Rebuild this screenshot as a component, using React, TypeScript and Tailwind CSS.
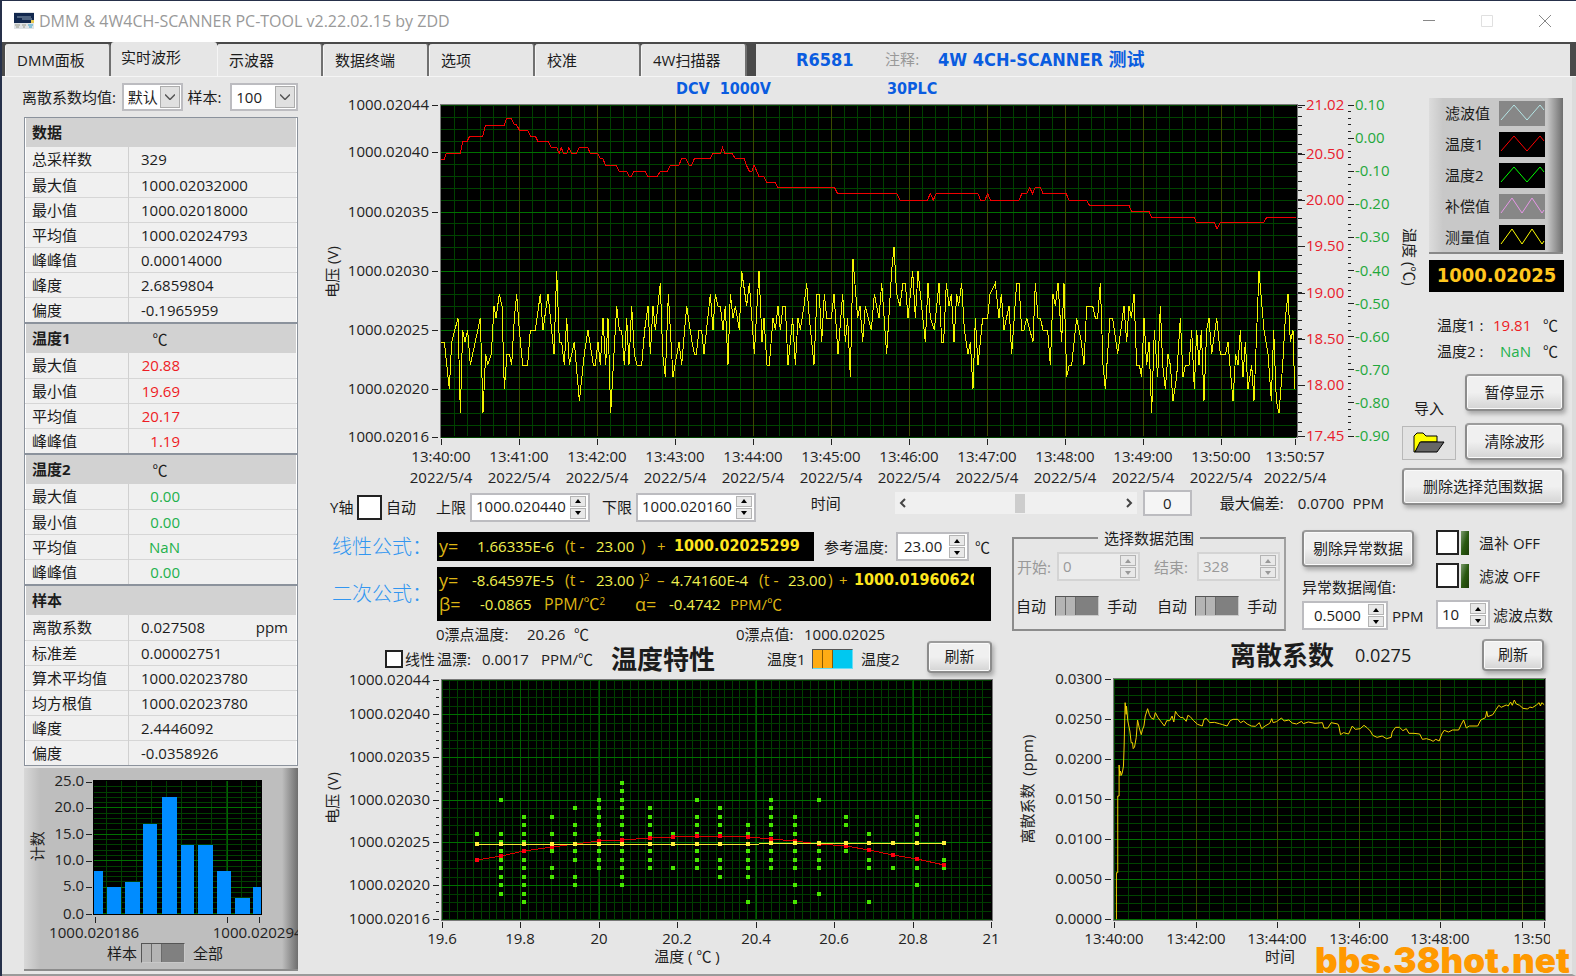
import { ReactNode, useState } from "react";

type Point = [number, number];

const range = (n: number) => Array.from({ length: n }, (_, i) => i);

const parse = (text: string): Point[] =>
  text.split(" ").map((pair) => pair.split(",").map(Number) as Point);

// Measured value, three stretches of the record: [start offset, "x,level ..."]
const waveParts: [number, string][] = [
  [0, "15,24 25,24 40,20 47,24 66,26 73,18 80,25 87,24 95,25 103,22 133,26 141,18 149,23 155,22 166,23 174,27 180,26 190,28 198,27 205,20 213,23 220,23 227,22 235,26 242,28 250,25 260,22 275,22 283,25 298,25 313,28 321,25 336,28 354,23 362,30 370,24 377,24 385,22 392,26 400,22 415,24 430,19 445,23 456,25 472,22 478,22 486,24 493,22 501,26 509,22 516,26 524,18 542,27 550,25 557,25 565,22 572,26 579,22 587,27 595,23 603,22 617,22 626,25 636,27 643,23 651,27 658,25 673,29 680,23 688,21 697,28 711,21 729,24 737,22 752,27 768,24 775,23 781,23 789,25 797,25 804,23 823,28 831,25 838,28 846,27 853,27"],
  [858, "3,25 10,27 18,22 25,28 33,26 40,27 52,25 59,30 74,27 82,29 97,23 111,30 120,24 126,26 135,22 142,22 153,26 160,25 168,27 175,25 183,27 190,27 198,22 212,26 220,22 228,26 235,25 246,27 254,29 262,26 276,22 285,28 292,28 299,24 307,28 314,26 328,26 336,28 348,23 362,28 370,24 377,26 385,21 393,31 407,26 414,27 422,24 430,27 448,25 457,28 471,26 479,29 494,23 509,30 516,32 524,28 534,27 543,29 550,29 558,26 572,30 580,26 588,30 610,24 618,29 625,26 637,25 651,29 659,24 665,24 673,29 681,27 688,28 696,24 704,28 710,27 719,29 727,25 738,23 745,24 753,20 760,26 768,22 782,26 797,26 804,28 820,29 831,26 838,28 846,25"],
  [1716, "3,27 11,23 26,29 33,29 41,25 48,25 56,26 75,24 82,29 90,26 97,26 105,25 119,25 127,22 135,28 142,27 150,29 161,24 168,29 176,21 184,22 191,22 206,26 220,24 228,22 236,27 254,27 262,26 269,26 277,29 285,22 292,20 306,26 314,26 329,23 348,27 356,24 363,27 370,26 378,28 386,22 394,22 401,21 408,26 416,22 423,24 431,18 439,25 449,21 457,27 464,22 472,20 480,23 487,22 495,19 506,21 517,26 525,21 532,22 543,22 551,25 559,20 566,25 573,22 580,25 588,19 596,25 603,26 611,23 626,26 637,23 653,23 660,24 675,19 683,23 690,22 697,25 705,21 712,24 720,20 731,22 738,19 753,30 768,25 780,23 790,19 797,25 805,19 813,18 824,22 832,26 840,28 847,24 855,25 860,20"],
];

const temperatureParts: [number, string][] = [
  [0, "1316,477 1325,477 1330,461 1372,461 1380,423 1393,423 1400,409 1439,409 1447,375 1503,375 1510,356 1524,356 1532,372 1540,375 1548,390 1568,390"],
  [1578, "5,390 14,409 28,409 35,423 66,423 75,443 92,443 99,461 105,443 113,461 121,461 128,443 137,461 150,461 158,443 184,443 192,461 214,461 222,476 229,476 237,495 269,495 278,514 300,514 308,529 314,529 321,514 355,514 363,529 392,529 400,514 422,514 431,495 456,495 464,476 476,476 486,495 494,495 502,476 549,476 556,461 580,461 586,443 593,461 615,461 624,476 650,476 659,500 666,514 673,514 680,495 688,514 694,529 709,529 717,547 743,547 750,563 920,563 929,581 1105,581 1115,600 1197,600 1205,581 1214,600 1223,581 1347,581 1355,600 1368,600 1376,581 1385,600 1470,600 1478,581 1492,581 1501,563 1510,581 1518,563 1534,563 1541,581"],
  [3150, "48,581 57,600 108,600 117,615 235,615 243,634 295,634 303,652 430,652 436,667 489,667 498,686 508,667 637,667 646,652 734,652"],
];

const dispersion =
  "198,820 198,680 202,680 202,450 206,450 206,357 208,390 210,375 213,388 216,378 219,360 221,300 222,255 224,170 227,205 228,180 232,225 238,255 242,290 246,290 248,308 252,303 257,275 261,222 266,245 272,266 276,250 280,240 284,210 291,188 296,205 301,215 309,220 314,200 322,215 332,228 341,240 348,224 357,224 364,210 369,228 374,196 380,206 390,215 396,214 406,226 411,208 418,212 428,224 440,235 454,240 459,220 466,217 476,230 490,229 505,233 515,236 528,240 537,224 546,220 560,220 568,230 577,225 588,234 600,240 612,241 624,230 631,248 641,240 655,232 661,218 665,230 675,227 690,216 698,225 712,222 722,231 735,234 750,226 755,233 770,228 790,232 812,230 817,246 828,246 838,230 858,234 861,240 866,266 875,260 890,264 901,240 910,250 925,248 936,238 945,245 955,255 962,268 975,274 990,270 1003,278 1017,274 1020,258 1030,244 1042,244 1052,254 1062,248 1070,262 1085,262 1102,264 1110,280 1122,278 1135,282 1142,286 1150,280 1160,285 1168,264 1175,253 1188,258 1200,252 1218,252 1226,235 1233,222 1241,246 1250,240 1275,240 1284,222 1298,215 1302,196 1305,212 1320,206 1330,190 1338,178 1345,184 1360,177 1366,180 1373,168 1378,178 1384,162 1390,174 1400,178 1410,187 1424,189 1430,183 1438,185 1450,177 1458,170 1462,180 1466,170 1473,176";

// Temperature, fitted curve height and the sampled levels of each column
const scatter: [number, number, number[]][] = [
  [19.69, 642, [26]],
  [19.75, 631, [30, 26, 25, 24, 23, 22, 21, 20, 19]],
  [19.81, 616, [28, 27, 26, 25, 24, 23, 22, 21, 20, 19, 18]],
  [19.88, 604, [28, 26, 24, 22, 21]],
  [19.94, 593, [29, 27, 26, 24, 23, 21, 20]],
  [20.0, 586, [30, 29, 28, 27, 26, 24, 23, 22]],
  [20.06, 582, [32, 31, 30, 29, 28, 27, 26, 24, 23, 22, 21, 20]],
  [20.13, 575, [29, 28, 27, 26, 24, 23, 22]],
  [20.19, 574, [26, 22]],
  [20.25, 571, [30, 28, 27, 26, 24, 23, 22]],
  [20.31, 571, [29, 28, 27, 26, 23, 22, 21]],
  [20.38, 574, [27, 26, 24, 23, 22, 21, 18]],
  [20.44, 579, [30, 29, 28, 27, 26, 24, 23, 22]],
  [20.5, 585, [28, 27, 26, 24, 23, 22, 20, 18]],
  [20.56, 593, [30, 24, 23, 22, 19]],
  [20.63, 601, [28, 27, 24]],
  [20.69, 612, [26, 23, 22, 18]],
  [20.75, 627, [22]],
  [20.81, 638, [28, 27, 26, 22, 20]],
  [20.88, 658, [23, 22]],
];

const voltLevels = [44, 40, 35, 30, 25, 20, 16];

function Label({ x, y, children, anchor = "middle", fill = "#222" }: { x: number; y: number; children: ReactNode; anchor?: "start" | "middle" | "end"; fill?: string }) {
  return (
    <text x={x} y={y + 5} textAnchor={anchor} fill={fill} fontSize="15">
      {children}
    </text>
  );
}

function Line({ x1, y1, x2, y2, c = "#222", w = 1 }: { x1: number; y1: number; x2: number; y2: number; c?: string; w?: number }) {
  return <line x1={x1} y1={y1} x2={x2} y2={y2} stroke={c} strokeWidth={w} />;
}

function MainChart() {
  const left = 441;
  const right = 1296;
  const vy = (v: number) => Math.round(105 + (44 - v) * 11.84);
  const tx = (minute: number) => Math.round(441.4 + minute * 77.93);
  const wave = waveParts
    .flatMap(([off, s]) => parse(s).map(([x, v]) => `${436 + (off + x) / 3},${vy(v)}`))
    .join(" ");
  const temp = temperatureParts
    .flatMap(([off, s]) => parse(s).map(([x, y]) => `${(off + x * 1.0064) / 3},${y / 3}`))
    .join(" ");
  const stamps = [...range(11).map((m) => ({ x: tx(m), t: `13:${40 + m}:00` })), { x: 1295, t: "13:50:57" }];
  const reds: [string, number][] = [["21.02", 105], ["20.50", 154], ["20.00", 200], ["19.50", 246], ["19.00", 293], ["18.50", 339], ["18.00", 385], ["17.45", 436]];

  return (
    <svg viewBox="325 97 1077 395" className="block w-full overflow-visible">
      <g shapeRendering="crispEdges">
        <rect x="440" y="104" width="857" height="333" fill="#000" stroke="#777" />
        {range(65).map((i) => i % 6 !== 0 && <Line key={i} x1={tx(i / 6)} x2={tx(i / 6)} y1={105} y2={436} c="#004000" />)}
        {range(29).map((i) => <Line key={i} x1={left} x2={right} y1={vy(16 + i)} y2={vy(16 + i)} c="#004400" />)}
        {voltLevels.slice(1, 6).map((v) => <Line key={v} x1={left} x2={right} y1={vy(v)} y2={vy(v)} c="#007000" />)}
        {range(10).map((i) => <Line key={i} x1={tx(i + 1)} x2={tx(i + 1)} y1={105} y2={436} c="#3c4a00" />)}
        {voltLevels.map((v) => <Line key={v} x1={432} x2={438} y1={vy(v)} y2={vy(v)} />)}
        {stamps.map((s) => <Line key={s.t} x1={s.x} x2={s.x} y1={439} y2={445} />)}
        {reds.map(([t, y]) => <Line key={t} x1={1298} x2={1305} y1={y} y2={y} />)}
        {range(36).map((i) => <Line key={i} x1={1298} x2={1302} y1={107 + i * 9.27} y2={107 + i * 9.27} />)}
        {range(11).map((i) => <Line key={i} x1={1348} x2={1354} y1={105 + i * 33.1} y2={105 + i * 33.1} />)}
        {range(51).map((i) => <Line key={i} x1={1348} x2={1351} y1={105 + i * 6.62} y2={105 + i * 6.62} />)}
        <polyline points={wave} fill="none" stroke="#f2f200" />
        <polyline points={temp} fill="none" stroke="#f00000" />
      </g>
      {voltLevels.map((v) => <Label key={v} x={429} y={vy(v)} anchor="end">{`1000.020${v}`}</Label>)}
      {stamps.map((s) => (
        <g key={s.t}>
          <Label x={s.x} y={457}>{s.t}</Label>
          <Label x={s.x} y={478}>2022/5/4</Label>
        </g>
      ))}
      {reds.map(([t, y]) => <Label key={t} x={1306} y={y} anchor="start" fill="#e8202c">{t}</Label>)}
      {range(11).map((i) => (
        <Label key={i} x={1355} y={Math.round(105 + i * 33.1)} anchor="start" fill="#1fa83c">
          {(0.1 - i * 0.1).toFixed(2).replace("-0.00", "0.00")}
        </Label>
      ))}
      <g transform="rotate(-90 333 272)">
        <Label x={333} y={272}>电压 (V)</Label>
      </g>
    </svg>
  );
}

function ScatterChart() {
  const vy = (v: number) => Math.round(680 + (44 - v) * 8.55);
  const tx = (t: number) => Math.round(442 + (t - 19.6) * 392.2);
  const cy = (y: number) => Math.round(646 + y / 3);
  const fitted = scatter.map(([t, y]) => `${tx(t)},${cy(y)}`).join(" ");

  return (
    <svg viewBox="325 672 675 302" className="block w-full overflow-visible">
      <g shapeRendering="crispEdges">
        <rect x="441" y="679" width="551" height="241" fill="#000" stroke="#777" />
        {range(70).map((i) => <Line key={i} x1={442 + i * 7.84} x2={442 + i * 7.84} y1={680} y2={919} c="#004000" />)}
        {range(29).map((i) => <Line key={i} x1={442} x2={991} y1={vy(16 + i)} y2={vy(16 + i)} c="#003c00" />)}
        {voltLevels.slice(1, 6).map((v) => <Line key={v} x1={442} x2={991} y1={vy(v)} y2={vy(v)} c="#007000" />)}
        {range(6).map((i) => <Line key={i} x1={tx(19.8 + i * 0.2)} x2={tx(19.8 + i * 0.2)} y1={680} y2={919} c="#006400" />)}
        {range(29).map((i) => <Line key={i} x1={436} x2={439} y1={vy(16 + i)} y2={vy(16 + i)} />)}
        {voltLevels.map((v) => <Line key={v} x1={433} x2={439} y1={vy(v)} y2={vy(v)} />)}
        {range(8).map((i) => <Line key={i} x1={tx(19.6 + i * 0.2)} x2={tx(19.6 + i * 0.2)} y1={922} y2={928} />)}
        {scatter.map(([t, , levels]) =>
          levels.map((v) => <rect key={`${t}-${v}`} x={tx(t) - 2} y={vy(v) - 2} width="4" height="4" fill="#48e600" />)
        )}
        <polyline points={fitted} fill="none" stroke="#d80000" />
        <polyline points="477,844 759,844 761,843 943,843" fill="none" stroke="#f5e632" />
        {scatter.map(([t, y]) => (
          <g key={t}>
            <rect x={tx(t) - 2} y={cy(y) - 2} width="4" height="4" fill="#ff0010" />
            <rect x={tx(t) - 2} y={t < 20.4 ? 842 : 841} width="4" height="4" fill="#fff03c" />
          </g>
        ))}
      </g>
      {voltLevels.map((v) => <Label key={v} x={430} y={vy(v)} anchor="end">{`1000.020${v}`}</Label>)}
      {["19.6", "19.8", "20", "20.2", "20.4", "20.6", "20.8", "21"].map((t) => <Label key={t} x={tx(Number(t))} y={939}>{t}</Label>)}
      <Label x={687} y={957}>温度 ( ℃ )</Label>
      <g transform="rotate(-90 333 798)">
        <Label x={333} y={798}>电压 (V)</Label>
      </g>
    </svg>
  );
}

function DispersionChart() {
  const tx = (i: number) => Math.round(1114 + i * 13.59);
  const points = parse(dispersion).map(([x, y]) => `${1050 + (x * 1.0064) / 3},${646 + y / 3}`).join(" ");

  return (
    <svg viewBox="1012 672 552 302" className="block w-full overflow-visible">
      <clipPath id="timeAxis">
        <rect x="1012" y="925" width="538" height="30" />
      </clipPath>
      <g shapeRendering="crispEdges">
        <rect x="1113" y="678" width="432" height="242" fill="#000" stroke="#777" />
        {range(32).map((i) => <Line key={i} x1={tx(i)} x2={tx(i)} y1={679} y2={919} c="#004000" />)}
        {range(31).map((i) => <Line key={i} x1={1114} x2={1544} y1={679 + i * 8} y2={679 + i * 8} c={i % 5 ? "#004400" : "#007000"} />)}
        {range(5).map((i) => <Line key={i} x1={tx(6 * i + 6)} x2={tx(6 * i + 6)} y1={679} y2={919} c="#3c4a00" />)}
        {range(7).map((i) => <Line key={i} x1={1105} x2={1111} y1={679 + i * 40} y2={679 + i * 40} />)}
        {range(6).map((i) => <Line key={i} x1={tx(6 * i)} x2={tx(6 * i)} y1={922} y2={928} />)}
        <Line x1={1544} x2={1544} y1={922} y2={928} />
      </g>
      <polyline points={points} fill="none" stroke="#f0d000" />
      {range(7).map((i) => <Label key={i} x={1102} y={679 + i * 40} anchor="end">{(0.03 - i * 0.005).toFixed(4)}</Label>)}
      <g clipPath="url(#timeAxis)">
        {range(6).map((i) => <Label key={i} x={i === 5 ? 1543 : tx(6 * i)} y={939}>{`13:${40 + 2 * i}:00`}</Label>)}
      </g>
      <Label x={1280} y={957}>时间</Label>
      <g transform="rotate(-90 1028 789)">
        <Label x={1028} y={789}>{"离散系数\u00a0\u00a0(ppm)"}</Label>
      </g>
    </svg>
  );
}

const bars: [number, number, number][] = [
  [94, 9, 8], [107, 14, 5], [125, 15, 6], [143, 14, 17], [161, 15, 22],
  [180, 13, 13], [197, 15, 13], [216, 14, 8], [234, 15, 3], [252, 8, 5],
];

function Histogram() {
  return (
    <svg viewBox="24 768 273 176" className="block w-full">
      <g shapeRendering="crispEdges">
        <rect x="93" y="780" width="168" height="134" fill="#000" />
        {range(11).map((i) => <Line key={i} x1={106 + i * 15} x2={106 + i * 15} y1={781} y2={913} c="#004000" />)}
        {range(25).map((i) => <Line key={i} x1={94} x2={260} y1={913 - i * 5.26} y2={913 - i * 5.26} c={i % 5 ? "#004000" : "#007000"} />)}
        <Line x1={227} x2={227} y1={781} y2={913} c="#006400" />
        {bars.map(([x, w, n]) => <rect key={x} x={x} y={913 - n * 5.26} width={w} height={n * 5.26} fill="#008cff" />)}
        {range(6).map((i) => <Line key={i} x1={86} x2={92} y1={782 + i * 26.3} y2={782 + i * 26.3} />)}
        {[95, 227, 259].map((x) => <Line key={x} x1={x} x2={x} y1={916} y2={922} />)}
      </g>
      {range(6).map((i) => <Label key={i} x={84} y={Math.round(781 + i * 26.3)} anchor="end">{(25 - i * 5).toFixed(1)}</Label>)}
      <Label x={49} y={932} anchor="start">1000.020186</Label>
      <Label x={212} y={932} anchor="start">1000.020294</Label>
      <g transform="rotate(-90 38 846)">
        <Label x={38} y={846}>计数</Label>
      </g>
    </svg>
  );
}

type Row = { name: string; value: string; unit?: string };

const sections: { title: string; unit?: string; tone: string; rows: Row[] }[] = [
  {
    title: "数据",
    tone: "text-[#1c1c1c]",
    rows: [
      { name: "总采样数", value: "329" },
      { name: "最大值", value: "1000.02032000" },
      { name: "最小值", value: "1000.02018000" },
      { name: "平均值", value: "1000.02024793" },
      { name: "峰峰值", value: "0.00014000" },
      { name: "峰度", value: "2.6859804" },
      { name: "偏度", value: "-0.1965959" },
    ],
  },
  {
    title: "温度1",
    unit: "℃",
    tone: "text-[#ee1c24]",
    rows: [
      { name: "最大值", value: "20.88" },
      { name: "最小值", value: "19.69" },
      { name: "平均值", value: "20.17" },
      { name: "峰峰值", value: "1.19" },
    ],
  },
  {
    title: "温度2",
    unit: "℃",
    tone: "text-[#22b14c]",
    rows: [
      { name: "最大值", value: "0.00" },
      { name: "最小值", value: "0.00" },
      { name: "平均值", value: "NaN" },
      { name: "峰峰值", value: "0.00" },
    ],
  },
  {
    title: "样本",
    tone: "text-[#1c1c1c]",
    rows: [
      { name: "离散系数", value: "0.027508", unit: "ppm" },
      { name: "标准差", value: "0.00002751" },
      { name: "算术平均值", value: "1000.02023780" },
      { name: "均方根值", value: "1000.02023780" },
      { name: "峰度", value: "2.4446092" },
      { name: "偏度", value: "-0.0358926" },
    ],
  },
];

function StatsTable() {
  return (
    <div className="ml-0.5 border border-[#8b929c] bg-[#8b929c]">
      {sections.map((s, i) => (
        <table key={s.title} className={`w-full table-fixed border-collapse border-x border-white bg-[#f0f0f0] ${i > 0 ? "mt-0.5" : ""}`}>
          <thead>
            <tr className="h-[29px] bg-[#d2d2d2] text-left">
              <th scope="col" className="w-[103px] pb-0.5 pl-1.5 font-bold">{s.title}</th>
              <th scope="col" className="pl-6 font-normal">{s.unit}</th>
            </tr>
          </thead>
          <tbody>
            {s.rows.map((r) => (
              <tr key={r.name} className="h-[25px] border-b border-[#d6d6d6] last:border-b-0">
                <th scope="row" className="border-r border-[#d0d0d0] pl-1.5 text-left font-normal">{r.name}</th>
                <td className={`pl-3 ${s.tone}`}>
                  <div className="flex justify-between pr-2">
                    <span className={s.unit ? "w-[39px] text-right" : ""}>{r.value}</span>
                    <span>{r.unit}</span>
                  </div>
                </td>
              </tr>
            ))}
          </tbody>
        </table>
      ))}
    </div>
  );
}

function PushButton({ children, className = "" }: { children: ReactNode; className?: string }) {
  return (
    <button className={`rounded border-2 border-[#8c8c8c] border-t-[#9c9c9c] bg-gradient-to-b from-[#f0f0f0] from-50% to-[#d4d4d4] pb-0.5 text-[#1c1c1c] shadow-[inset_0_0_0_1px_#fafafa,2px_3px_4px_#a8a8a8] ${className}`}>
      {children}
    </button>
  );
}

function Spin({ label, value, className = "", disabled = false }: { label: string; value: string; className?: string; disabled?: boolean }) {
  const [text, setText] = useState(value);
  const step = (d: number) => {
    const digits = (text.split(".")[1] || "").length;
    setText((Number(text) + d / 10 ** digits).toFixed(digits));
  };
  return (
    <div className={`flex h-[29px] shrink-0 items-center border-2 pr-0.5 ${disabled ? "border-[#d4d4d4] bg-[#ececec] text-[#999]" : "border-[#bcbcc0] bg-white"} ${className}`}>
      <input aria-label={label} value={text} disabled={disabled} onChange={(e) => setText(e.target.value)} className="w-0 min-w-0 flex-1 bg-transparent pb-0.5 pl-1 outline-none" />
      <div className="flex w-4 flex-col gap-px">
        {[1, -1].map((d) => (
          <button key={d} disabled={disabled} aria-label={d > 0 ? `${label} +` : `${label} -`} onClick={() => step(d)} className="flex h-[11px] items-center justify-center border border-[#b4b4b4] bg-[#e8e8e8]">
            <svg viewBox="0 0 8 4" className={`h-1 w-2 ${disabled ? "fill-[#999]" : "fill-black"} ${d < 0 ? "rotate-180" : ""}`}>
              <path d="M4 0 7 4H1z" />
            </svg>
          </button>
        ))}
      </div>
    </div>
  );
}

function Check({ label, className }: { label: string; className: string }) {
  return <input type="checkbox" aria-label={label} className={`shrink-0 appearance-none border-2 border-[#222] bg-white checked:bg-gray-600 ${className}`} />;
}

function Toggle({ label, bright = false }: { label: string; bright?: boolean }) {
  const [on, setOn] = useState(false);
  return (
    <button
      role="switch"
      aria-checked={on}
      aria-label={label}
      onClick={() => setOn(!on)}
      className={`flex h-5 shrink-0 border border-t-[#555] border-l-[#555] ${on ? "justify-end" : "justify-start"} ${bright ? "w-[41px] border-[#66dcf5] bg-[#00c8f0]" : "w-[44px] border-[#c8c8c8] bg-[#808080]"}`}
    >
      <span className={`h-full w-2.5 border-r ${bright ? "border-[#8a5a00] bg-[#ffac14]" : "border-[#6a6a6a] bg-[#b4b4b4]"}`} />
      <span className={`h-full w-2.5 border-r ${bright ? "border-[#8a5a00] bg-[#ffac14]" : "border-[#6a6a6a] bg-[#b4b4b4]"}`} />
    </button>
  );
}

function Combo({ label, options, className }: { label: string; options: string[]; className: string }) {
  return (
    <div className={`relative h-7 border-2 border-[#bcbcc0] bg-white ${className}`}>
      <select aria-label={label} className="h-full w-full appearance-none bg-transparent pl-1 leading-6 outline-none">
        {options.map((o) => <option key={o}>{o}</option>)}
      </select>
      <span className="pointer-events-none absolute inset-y-px right-px flex w-5 items-center justify-center border border-[#acacac] bg-[#e0e0e0]">
        <svg viewBox="0 0 10 6" className="h-1.5 w-2.5" fill="none" stroke="#555" strokeWidth="1.5">
          <path d="M0 0.5 5 5.5 10 0.5" />
        </svg>
      </span>
    </div>
  );
}

const legend = [
  { name: "滤波值", box: "bg-[#878787]", color: "#b4e6e6", path: "M2 19 15 4 28 19 41 4 45 9" },
  { name: "温度1", box: "bg-black", color: "#ff0000", path: "M2 19 15 4 28 19 41 4 45 9" },
  { name: "温度2", box: "bg-black", color: "#00ff00", path: "M2 19 15 4 28 19 41 4 45 9" },
  { name: "补偿值", box: "bg-[#878787]", color: "#e696e6", path: "M2 19 13 4 23 19 33 4 43 19 45 16" },
  { name: "测量值", box: "bg-black", color: "#ffff00", path: "M2 19 13 4 23 19 33 4 43 19 45 16" },
];

function Sidebar() {
  return (
    <aside className="flex w-[162px] shrink-0 flex-col pt-[18px]">
      <div className="flex justify-between">
        <div className="flex h-[156px] w-4 items-end">
          <span className="-mb-8 whitespace-nowrap leading-4 [writing-mode:vertical-rl] [text-orientation:sideways]">温度 (℃)</span>
        </div>
        <div className="w-[135px]">
          <ul className="flex h-[156px] w-[134px] flex-col gap-[5px] border-b-2 border-[#888] bg-[linear-gradient(to_right,#dcdcdc,#c8c8c8_14px,#c8c8c8_118px,#6e6e6e)] pt-0.5">
            {legend.map((l) => (
              <li key={l.name} className="flex h-[26px] items-center pl-4">
                <span className="w-[54px]">{l.name}</span>
                <svg viewBox="0 0 46 25" className={`h-[25px] w-[46px] ${l.box}`} fill="none" stroke={l.color}>
                  <path d={l.path} />
                </svg>
              </li>
            ))}
          </ul>
          <output className="mt-1.5 block h-8 bg-black text-center font-['DejaVu_Sans_Condensed','DejaVu_Sans',sans-serif] text-[20px] leading-[30px] font-bold text-[#ffc61e]">1000.02025</output>
        </div>
      </div>
      <dl className="mt-5 grid grid-cols-[56px_38px_27px] justify-end pr-1.5 text-right leading-[26px]">
        <dt className="text-left">温度1 :</dt>
        <dd className="text-[#ee1c24]">19.81</dd>
        <dd>℃</dd>
        <dt className="text-left">温度2 :</dt>
        <dd className="text-[#22b14c]">NaN</dd>
        <dd>℃</dd>
      </dl>
      <div className="mt-2.5 flex justify-between">
        <div className="flex w-[54px] flex-col items-center pt-6">
          <label htmlFor="import" className="leading-5">导入</label>
          <button id="import" className="mt-2 flex h-[34px] w-full items-center justify-center border border-[#b8b8b8] bg-[#e2e2e2]">
            <svg viewBox="0 0 32 22" className="h-[22px] w-8" stroke="#000" strokeWidth="1">
              <path d="M1 20V4L4 1H10L13 4H24V10H8L2 20z" fill="#ffff00" />
              <path d="M7 10H31L24 20H2z" fill="#666" />
            </svg>
          </button>
        </div>
        <div className="flex w-[99px] flex-col gap-3">
          <PushButton className="h-[37px]">暂停显示</PushButton>
          <PushButton className="h-[37px]">清除波形</PushButton>
        </div>
      </div>
      <PushButton className="mt-2 h-[37px]">删除选择范围数据</PushButton>
    </aside>
  );
}

function ChartControls() {
  return (
    <div className="mb-1 flex h-[30px] items-center pl-[5px] whitespace-nowrap">
      <span className="w-[27px]">Y轴</span>
      <Check label="自动" className="h-[25px] w-[25px]" />
      <span className="ml-1 w-[50px]">自动</span>
      <span className="w-[34px]">上限</span>
      <Spin label="上限" value="1000.020440" className="w-[120px]" />
      <span className="ml-3 w-[34px]">下限</span>
      <Spin label="下限" value="1000.020160" className="w-[120px]" />
      <div className="ml-auto flex items-center pr-[18px] pb-2">
        <label htmlFor="time" className="mr-[54px]">时间</label>
        <div className="flex h-[22px] w-[242px] items-center bg-[#f0f0f0] px-1">
          <button aria-label="后退" className="w-3">
            <svg viewBox="0 0 8 10" className="h-2.5 w-2" fill="none" stroke="#444" strokeWidth="2"><path d="M6 1 2 5 6 9" /></svg>
          </button>
          <input
            id="time"
            type="range"
            defaultValue={52}
            className="h-5 w-0 flex-1 appearance-none bg-transparent [&::-webkit-slider-thumb]:h-[19px] [&::-webkit-slider-thumb]:w-2.5 [&::-webkit-slider-thumb]:appearance-none [&::-webkit-slider-thumb]:bg-[#cdcdcd]"
          />
          <button aria-label="前进" className="w-3">
            <svg viewBox="0 0 8 10" className="ml-1 h-2.5 w-2" fill="none" stroke="#444" strokeWidth="2"><path d="M2 1 6 5 2 9" /></svg>
          </button>
        </div>
        <input aria-label="位置" defaultValue="0" className="ml-1.5 h-[26px] w-[49px] border-2 border-[#bcbcc0] bg-[#f5f5f5] text-center outline-none" />
        <span className="ml-7">最大偏差:</span>
        <span className="ml-3.5">0.0700</span>
        <span className="ml-2">PPM</span>
      </div>
    </div>
  );
}

function Formulas() {
  const bold = "overflow-hidden font-['DejaVu_Sans_Condensed','DejaVu_Sans',sans-serif] text-[16px] font-bold text-[#ffe61e]";
  const name = "w-[105px] shrink-0 text-[20px] font-light text-[#3296f0]";
  return (
    <div className="flex flex-col gap-1.5 whitespace-nowrap pt-1 pl-[7px]">
      <div className="flex items-center">
        <span className={name}>线性公式：</span>
        <div className="flex h-[29px] w-[377px] items-center overflow-hidden bg-black pb-0.5 pl-0.5 text-[#dcb414]">
          <span className="w-[38px] text-[18px]">y=</span>
          <span className="w-[88px] text-[#f0f050]">1.66335E-6</span>
          <span className="w-[31px] text-[16px]">(t -</span>
          <span className="w-[45px] text-[#f0f050]">23.00</span>
          <span className="w-4 text-[16px]">)</span>
          <span className="w-[17px]">+</span>
          <span className={bold}>1000.02025299</span>
        </div>
        <span className="ml-2.5 w-[72px]">参考温度:</span>
        <Spin label="参考温度" value="23.00" className="w-[73px] pl-0.5" />
        <span className="ml-1.5">℃</span>
      </div>
      <div className="flex items-center">
        <span className={name}>二次公式：</span>
        <div className="flex h-[54px] w-[554px] flex-col bg-black pl-0.5 text-[#dcb414]">
          <div className="flex h-[26px] items-center">
            <span className="w-[33px] text-[18px]">y=</span>
            <span className="w-[93px] text-[#f0f050]">-8.64597E-5</span>
            <span className="w-[31px] text-[16px]">(t -</span>
            <span className="w-[43px] text-[#f0f050]">23.00</span>
            <span className="w-[18px] text-[16px]">)<sup className="text-[10px]">2</sup></span>
            <span className="w-[14px]">–</span>
            <span className="w-[88px] text-[#f0f050]">4.74160E-4</span>
            <span className="w-[29px] text-[16px]">(t -</span>
            <span className="w-10 text-[#f0f050]">23.00</span>
            <span className="w-[11px] text-[16px]">)</span>
            <span className="w-[15px]">+</span>
            <span className={`w-[120px] ${bold}`}>1000.01960620</span>
          </div>
          <div className="flex h-[22px] items-center">
            <span className="w-[41px] text-[18px]">β=</span>
            <span className="w-[64px] text-[#f0f050]">-0.0865</span>
            <span className="w-[91px] text-[16px]">PPM/℃<sup className="text-[10px]">2</sup></span>
            <span className="w-[34px] text-[18px]">α=</span>
            <span className="w-[61px] text-[#f0f050]">-0.4742</span>
            <span>PPM/℃</span>
          </div>
        </div>
      </div>
    </div>
  );
}

function TemperaturePanel() {
  return (
    <section className="min-w-0">
      <Formulas />
      <div className="flex h-[25px] items-center pl-[111px]">
        <span className="w-[91px]">0漂点温度:</span>
        <span className="w-[47px]">20.26</span>
        <span className="w-[162px]">℃</span>
        <span className="w-[68px]">0漂点值:</span>
        <span>1000.02025</span>
      </div>
      <div className="flex h-[26px] items-center whitespace-nowrap pl-[60px]">
        <Check label="线性" className="h-[18px] w-[18px]" />
        <span className="w-[34px] pl-0.5">线性</span>
        <span className="w-[45px]">温漂:</span>
        <span className="w-[59px]">0.0017</span>
        <span className="w-[70px]">PPM/℃</span>
        <h2 className="w-[156px] text-[26px] leading-6 font-bold">温度特性</h2>
        <span className="w-[45px]">温度1</span>
        <Toggle label="温度1 / 温度2" bright />
        <span className="ml-2">温度2</span>
        <PushButton className="mr-2 mb-1 ml-auto h-8 w-[65px]">刷新</PushButton>
      </div>
      <ScatterChart />
    </section>
  );
}

function RangeBox() {
  return (
    <fieldset className="h-[103px] w-[274px] min-w-0 border-2 border-[#8c8c8c] border-r-[#a0a0a0] px-0.5">
      <legend className="mx-auto px-1.5 leading-5">选择数据范围</legend>
      <div className="flex items-center pt-1 pl-px text-[#999]">
        <span className="w-[40px]">开始:</span>
        <Spin label="开始" value="0" disabled className="w-[83px]" />
        <span className="ml-3.5 w-[43px]">结束:</span>
        <Spin label="结束" value="328" disabled className="w-[83px]" />
      </div>
      <div className="mt-3.5 flex items-center">
        <span className="w-[39px]">自动</span>
        <Toggle label="开始方式" />
        <span className="ml-2 w-[50px]">手动</span>
        <span className="w-[38px]">自动</span>
        <Toggle label="结束方式" />
        <span className="ml-2">手动</span>
      </div>
    </fieldset>
  );
}

function DispersionPanel() {
  return (
    <section className="min-w-0">
      <div className="flex h-[114px] whitespace-nowrap">
        <RangeBox />
        <div className="ml-4 flex w-[134px] flex-col pt-0.5">
          <PushButton className="h-[37px] w-[112px]">剔除异常数据</PushButton>
          <span className="mt-2 leading-6">异常数据阈值:</span>
          <div className="mt-0.5 flex items-center gap-1">
            <Spin label="异常数据阈值" value="0.5000" className="w-[86px] pl-1.5" />
            <span>PPM</span>
          </div>
        </div>
        <div className="flex flex-col gap-2 pt-0.5">
          {["温补 OFF", "滤波 OFF"].map((t) => (
            <div key={t} className="flex h-[25px] items-center">
              <Check label={t} className="h-[25px] w-[23px]" />
              <span className="ml-0.5 h-6 w-2 bg-gradient-to-br from-[#7a9a6a] via-[#2a5a10] to-[#1c3c08]" />
              <span className="ml-2.5">{t}</span>
            </div>
          ))}
          <div className="mt-1 flex items-center gap-[3px]">
            <Spin label="滤波点数" value="10" className="w-[54px]" />
            <span>滤波点数</span>
          </div>
        </div>
      </div>
      <div className="flex h-[30px] items-center pb-1 pl-[218px]">
        <h2 className="w-[125px] text-[26px] leading-6 font-bold">离散系数</h2>
        <span className="text-[18px]">0.0275</span>
        <PushButton className="mr-5 ml-auto h-8 w-[62px]">刷新</PushButton>
      </div>
      <DispersionChart />
    </section>
  );
}

function TitleBar() {
  return (
    <header className="flex h-[42px] items-center border-t border-[#26304a] bg-white pb-0.5 pl-3 text-[#999]">
      <svg viewBox="0 0 20 17" className="h-[17px] w-5">
        <rect width="20" height="17" fill="#dfe3e6" />
        <rect y="1" width="20" height="10" fill="#12284e" />
        <path d="M3 5H17M8 7H18" stroke="#8ca0b4" />
        <path d="M17 8H20V11H17z" fill="#e6c850" />
        <path d="M1 13H6M8 13H12M2 15H5M9 15H11" stroke="#9a9a8a" />
        <path d="M14 13H19M15 15H18" stroke="#32a0c8" />
      </svg>
      <h1 className="ml-[5px] text-[16px]">DMM &amp; 4W4CH-SCANNER PC-TOOL v2.22.02.15 by ZDD</h1>
      <div className="ml-auto flex items-center gap-[46px] pr-[25px]">
        <button aria-label="最小化"><svg viewBox="0 0 12 12" className="h-3 w-3" stroke="#888"><path d="M0 5.5H12" /></svg></button>
        <button aria-label="最大化" disabled><svg viewBox="0 0 12 12" className="h-3 w-3" fill="none" stroke="#e0e0e0"><path d="M.5.5H11.5V11.5H.5z" /></svg></button>
        <button aria-label="关闭"><svg viewBox="0 0 12 12" className="h-3 w-3" stroke="#888"><path d="M0 0 12 12M12 0 0 12" /></svg></button>
      </div>
    </header>
  );
}

const tabs = ["DMM面板", "实时波形", "示波器", "数据终端", "选项", "校准", "4W扫描器"];

function TabBar() {
  const [active, setActive] = useState("实时波形");
  return (
    <nav className="flex h-[35px] items-end border-b border-[#f5f5f5] bg-[#4a4a4a] pl-[3px]">
      {tabs.map((t) => (
        <button
          key={t}
          onClick={() => setActive(t)}
          className={`w-[106px] shrink-0 rounded-t-[3px] bg-[#e6e6e6] text-left ${
            active === t ? "h-[34px] pb-1 pl-2.5" : "h-8 border-r-2 border-l border-r-[#707070] border-l-[#f5f5f5] pl-[11px]"
          }`}
        >
          {t}
        </button>
      ))}
      <div className="mr-1.5 ml-[9px] flex h-8 flex-1 items-center bg-[#e6e6e6] pl-10 font-['DejaVu_Sans_Condensed','Noto_Sans_CJK_SC',sans-serif] text-[18px] font-bold text-[#0a5ce0]">
        <span className="w-[89px]">R6581</span>
        <span className="w-[53px] text-[15px] font-normal text-[#999]">注释:</span>
        <span>4W 4CH-SCANNER 测试</span>
      </div>
    </nav>
  );
}

export default function App() {
  return (
    <div className="relative flex min-h-screen flex-col overflow-hidden border-l-2 border-[#26304a] bg-[#e6e6e6] font-['Open_Sans','Noto_Sans_CJK_SC',sans-serif] text-[15px] leading-[22px] text-[#1c1c1c]">
      <TitleBar />
      <TabBar />
      <main className="flex flex-1 gap-[27px] border-r-4 border-b-2 border-r-[#dcdcdc] border-b-[#9a9a9a] pr-2 pl-5">
        <div className="flex w-[276px] shrink-0 flex-col pt-1.5">
          <div className="mb-1.5 flex items-center whitespace-nowrap">
            <span className="w-[100px]">离散系数均值:</span>
            <Combo label="离散系数均值" options={["默认"]} className="w-[62px]" />
            <span className="ml-1 w-[43px]">样本:</span>
            <Combo label="样本" options={["100"]} className="w-[68px]" />
          </div>
          <StatsTable />
          <div className="mt-0.5 ml-0.5 flex h-[203px] flex-col border-b-2 border-[#8c8c8c] bg-[linear-gradient(to_right,#d8d8d8,#bebebe_16px,#bebebe_258px,#6e6e6e)]">
            <Histogram />
            <div className="flex h-4 items-center justify-center gap-1 pl-2">
              <span>样本</span>
              <Toggle label="样本 / 全部" />
              <span className="ml-1">全部</span>
            </div>
          </div>
        </div>

        <div className="min-w-0 flex-1 pt-[3px]">
          <div className="flex">
            <div className="min-w-0 flex-1">
              <div className="flex h-[17px] items-end pl-[351px] font-['DejaVu_Sans_Condensed',sans-serif] text-[16px] leading-4 font-bold text-[#0a5ce0]">
                <span className="w-[211px] whitespace-pre">DCV  1000V</span>
                <span>30PLC</span>
              </div>
              <MainChart />
              <ChartControls />
            </div>
            <Sidebar />
          </div>
          <div className="mt-0.5 grid grid-cols-[675fr_552fr] gap-3">
            <TemperaturePanel />
            <DispersionPanel />
          </div>
        </div>
      </main>
      <span className="pointer-events-none absolute right-1.5 bottom-0.5 font-['Inter',sans-serif] text-[35px] leading-7 font-black text-[#ff9900]">bbs.38hot.net</span>
    </div>
  );
}
